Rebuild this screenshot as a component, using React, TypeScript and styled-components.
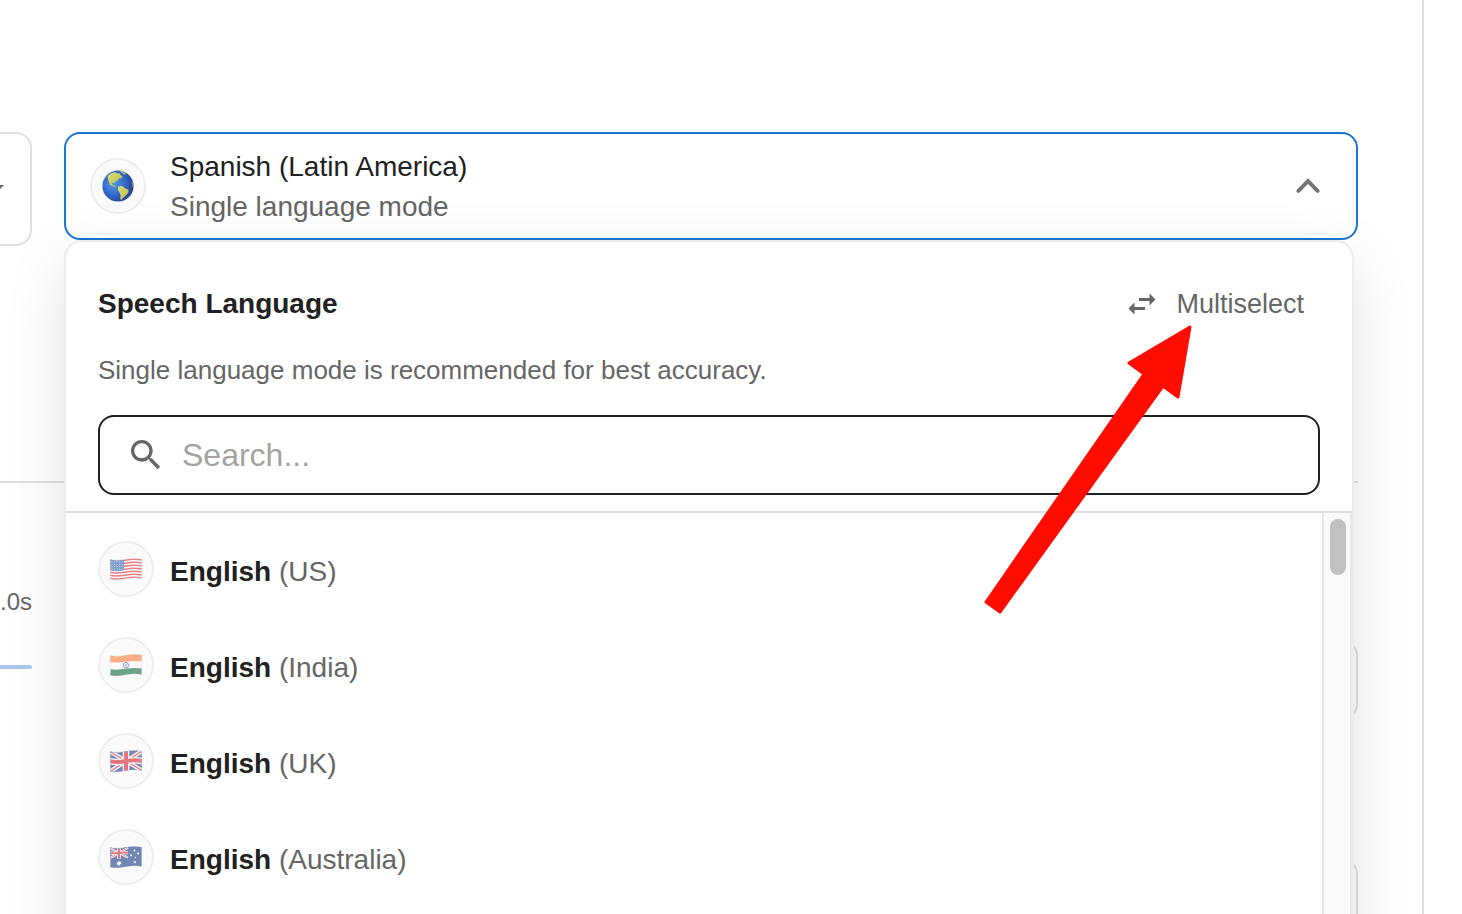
import React, { useId } from 'react';
import styled, { createGlobalStyle } from 'styled-components';

const GlobalStyle = createGlobalStyle`
  *, *::before, *::after { box-sizing: border-box; }
  body {
    margin: 0;
    background: #fff;
    color: #212121;
    font-family: "Liberation Sans", Arial, sans-serif;
  }
  button, input { font: inherit; color: inherit; }
`;

const Page = styled.main`
  display: flex;
  height: 100vh;
  padding-right: 38px;
  overflow: hidden;
`;

const Panel = styled.div`
  flex: 1;
  min-width: 0;
  padding: 132px 64px 0 0;
  border-right: 2px solid #dfdfdf;
`;

const FieldRow = styled.div`
  display: flex;
  align-items: flex-start;
  gap: 32px;
  height: 114px;
`;

const SideSelect = styled.button`
  display: flex;
  flex: none;
  align-items: center;
  justify-content: flex-end;
  width: 32px;
  height: 114px;
  padding: 0 12px 0 0;
  overflow: hidden;
  border: 2px solid #dfdfdf;
  border-left: 0;
  border-radius: 0 16px 16px 0;
  background: #fff;
  color: #666;
`;

const Icon = styled.svg<{ $size: number }>`
  display: block;
  flex: none;
  width: ${(p) => p.$size}px;
  height: ${(p) => p.$size}px;
  fill: currentColor;
`;

const Picker = styled.div`
  position: relative;
  flex: 1;
  min-width: 0;
`;

const Trigger = styled.button`
  display: flex;
  align-items: center;
  gap: 24px;
  width: 100%;
  height: 108px;
  padding: 0 24px;
  border: 2px solid #1976d2;
  border-radius: 16px;
  background: #fff;
  text-align: left;
  font-size: 28px;
  line-height: 40px;
`;

const TriggerText = styled.span`
  display: flex;
  flex: 1;
  flex-direction: column;
  padding-top: 2px;
`;

const Muted = styled.span`
  color: #666;
`;

const Badge = styled.span<{ $dim?: boolean }>`
  display: flex;
  flex: none;
  align-items: center;
  justify-content: center;
  width: 56px;
  height: 56px;
  border: 2px solid #eee;
  border-radius: 50%;
  background: #fafafa;

  svg { opacity: ${(p) => (p.$dim ? 0.6 : 1)}; }
`;

const Chevron = styled(Icon)`
  color: #757575;
`;

const Menu = styled.section`
  position: absolute;
  top: 110px;
  left: 2px;
  right: 6px;
  border-radius: 16px;
  background: #fff;
  box-shadow: 0 0 0 2px #ececec, 0 18px 64px rgba(0, 0, 0, 0.12);
`;

const MenuHeader = styled.header`
  display: flex;
  flex-direction: column;
  padding: 32px 32px 16px;
  border-bottom: 2px solid #dfdfdf;
`;

const TitleRow = styled.div`
  display: flex;
  align-items: center;
  justify-content: space-between;
  height: 60px;
`;

const Title = styled.h2`
  margin: 0;
  font-size: 28px;
  line-height: 40px;
`;

const ModeButton = styled.button`
  display: flex;
  align-items: center;
  gap: 16px;
  padding: 0 16px;
  border: 0;
  background: none;
  color: #666;
  font-size: 27px;
  line-height: 40px;
`;

const Hint = styled.p`
  margin: 16px 0 25px;
  color: #666;
  font-size: 26px;
  line-height: 40px;
`;

const SearchBox = styled.label`
  display: flex;
  align-items: center;
  gap: 16px;
  height: 80px;
  padding: 0 26px;
  border: 2px solid #212121;
  border-radius: 16px;
  color: #666;
`;

const SearchInput = styled.input`
  flex: 1;
  min-width: 0;
  padding: 0;
  border: 0;
  outline: 0;
  background: none;
  color: #212121;
  font-size: 32px;
  line-height: 40px;

  &::placeholder { color: #a3a3a3; opacity: 1; }
`;

const ListArea = styled.div`
  display: flex;
  min-height: 480px;
`;

const Languages = styled.ul`
  flex: 1;
  margin: 0;
  padding: 8px 0;
  list-style: none;
`;

const LanguageButton = styled.button`
  display: flex;
  align-items: center;
  gap: 16px;
  width: 100%;
  height: 96px;
  padding: 0 32px;
  border: 0;
  background: none;
  font-size: 28px;
  line-height: 40px;
  text-align: left;
`;

const LanguageName = styled.span`
  padding-top: 6px;
`;

const ScrollTrack = styled.div`
  width: 30px;
  padding: 6px 4px 0 6px;
  border: solid #e8e8e8;
  border-width: 0 2px;
  background: #fafafa;
`;

const ScrollThumb = styled.div`
  width: 16px;
  height: 56px;
  border-radius: 8px;
  background: #c1c1c1;
`;

const Arrow = styled.svg`
  position: absolute;
  top: 76px;
  right: 156px;
  width: 220px;
  height: 300px;
  pointer-events: none;
`;

const Divider = styled.hr`
  height: 2px;
  margin: 235px 0 0;
  border: 0;
  background: #dfdfdf;
`;

const Details = styled.div`
  display: flex;
  gap: 32px;
`;

const Timing = styled.div`
  display: flex;
  flex: none;
  flex-direction: column;
  width: 32px;
  padding-top: 99px;
  color: #666;
  font-size: 24px;
  line-height: 40px;
  text-align: right;
`;

const TimeBar = styled.div`
  height: 4px;
  margin-top: 43px;
  border-radius: 0 2px 2px 0;
  background: #a9c8ee;
`;

const Fields = styled.div`
  display: flex;
  flex: 1;
  flex-direction: column;
  gap: 138px;
  padding-top: 157px;
`;

const FieldOutline = styled.div`
  height: 80px;
  border: 2px solid #dfdfdf;
  border-radius: 16px;
`;

const WAVE = 'M0.4 2.4C5 4 9 3.4 15 2.4S26 1 31.6 2.2V21.4C26 20.4 21 20.8 15 21.8S5 23.2 0.4 22.2Z';

function Flag({ children }: { children: React.ReactNode }) {
  const id = useId();
  return (
    <svg width="32" height="24" viewBox="0 0 32 24" aria-hidden="true">
      <clipPath id={id}><path d={WAVE} /></clipPath>
      <g clipPath={`url(#${id})`}>{children}</g>
      <path d={WAVE} fill="none" stroke="#555" strokeOpacity="0.25" strokeWidth="0.8" />
    </svg>
  );
}

const band = (y: number) => `M0 ${y}C5 ${y + 1.6} 9 ${y + 1} 15 ${y}S26 ${y - 1.4} 32 ${y - 0.2}`;

function UnionJack() {
  return (
    <g>
      <rect width="32" height="24" fill="#1c3a8c" />
      <path d="M0 2.5L32 21.5M0 22.5L32 2" stroke="#fff" strokeWidth="4" />
      <path d="M0 2.5L32 21.5M0 22.5L32 2" stroke="#d8202f" strokeWidth="1.4" />
      <path d="M16 0V24" stroke="#fff" strokeWidth="6.5" />
      <path d={band(12.2)} stroke="#fff" strokeWidth="6.5" fill="none" />
      <path d="M16 0V24" stroke="#d8202f" strokeWidth="4" />
      <path d={band(12.2)} stroke="#d8202f" strokeWidth="4" fill="none" />
    </g>
  );
}

const flags: Record<string, React.ReactNode> = {
  US: (
    <>
      <rect width="32" height="24" fill="#fff" />
      {[0, 1, 2, 3, 4, 5, 6].map((i) => (
        <path key={i} d={band(3.2 + i * 3)} stroke="#dc2c3a" strokeWidth="1.5" fill="none" />
      ))}
      <path d="M0 0H14V13.2C9 14.2 5 14.8 0 13.2Z" fill="#2c62ad" />
      {[0, 1, 2, 3].map((r) =>
        [0, 1, 2, 3, 4].map((c) => (
          <circle key={`${r}-${c}`} cx={2 + c * 2.5} cy={4.8 + r * 2.4} r="0.5" fill="#dce8f8" />
        )),
      )}
    </>
  ),
  India: (
    <>
      <rect width="32" height="24" fill="#fff" />
      <path d={band(5)} stroke="#ff7a35" strokeWidth="7.6" fill="none" />
      <path d={band(19.4)} stroke="#0b6b3a" strokeWidth="7.2" fill="none" />
      <circle cx="16" cy="12.2" r="2.8" fill="#d9dcf5" stroke="#3a45a8" strokeWidth="0.8" />
      <circle cx="16" cy="12.2" r="0.8" fill="#3a45a8" />
    </>
  ),
  UK: <UnionJack />,
  Australia: (
    <>
      <rect width="32" height="24" fill="#173a86" />
      <g transform="translate(0 1.8) scale(0.56 0.5)"><UnionJack /></g>
      <g fill="#fff">
        <path d="M9 15.4l.7 1.5 1.6-.3-.7 1.4 1.1 1.1-1.6.2-.3 1.6-1.1-1.1-1.5.7.3-1.6-1.3-1 1.6-.4z" />
        <circle cx="24.5" cy="5.4" r="1" />
        <circle cx="21" cy="10.2" r="1" />
        <circle cx="28" cy="8.4" r="1" />
        <circle cx="25.6" cy="12.4" r="0.6" />
        <circle cx="24.8" cy="17.2" r="1.1" />
      </g>
    </>
  ),
};

function Globe() {
  const id = useId();
  return (
    <svg width="32" height="32" viewBox="0 0 32 32" aria-hidden="true">
      <defs>
        <radialGradient id={`${id}s`} cx="0.36" cy="0.42" r="0.66">
          <stop offset="0" stopColor="#4f9be0" />
          <stop offset="0.55" stopColor="#3568cc" />
          <stop offset="1" stopColor="#25408f" />
        </radialGradient>
        <linearGradient id={`${id}l`} x1="0" y1="0" x2="1" y2="1">
          <stop offset="0" stopColor="#d3e27a" />
          <stop offset="0.6" stopColor="#c9c95a" />
          <stop offset="1" stopColor="#a39f48" />
        </linearGradient>
        <clipPath id={`${id}c`}><circle cx="16" cy="16" r="15.6" /></clipPath>
      </defs>
      <circle cx="16" cy="16" r="15.6" fill={`url(#${id}s)`} />
      <g clipPath={`url(#${id}c)`} fill={`url(#${id}l)`}>
        <path d="M5.5 6.5C7.5 3.8 10 2.4 13 2.2L15.6 3.4 17.4 3 18.6 5.2 20.8 6.6 19 8.4 16.8 8.2 16.2 10 13.6 11.2 12.6 13 11.2 12.6 9.8 13 10.6 15 12.6 15.4 14.2 17.2 13 17.2 10.4 16 7.8 14.4 6.4 10.6Z" />
        <path d="M17 0.8L21 1.2 24.6 3 23.4 5 21.4 4.6 19.6 2.8Z" opacity="0.75" />
        <path d="M16.4 16.6L19 15.8 21.6 17 23.4 18.6 26.6 19.8 26.4 22.4 24 25.2 21.4 27.8 19 30 18.2 28.6 18.6 25.4 17.6 22.4 15.8 20Z" />
        <path d="M30 11L32 12V18L30.4 17Z" opacity="0.6" />
      </g>
    </svg>
  );
}

export default function App() {
  return (
    <>
      <GlobalStyle />
      <Page>
        <Panel>
          <FieldRow>
            <SideSelect type="button" aria-label="Open options">
              <Icon $size={48} viewBox="0 0 24 24"><path d="M7 10l5 5 5-5z" /></Icon>
            </SideSelect>
            <Picker>
              <Trigger type="button" aria-expanded="true" aria-controls="language-menu">
                <Badge><Globe /></Badge>
                <TriggerText>
                  <span>Spanish (Latin America)</span>
                  <Muted>Single language mode</Muted>
                </TriggerText>
                <Chevron $size={48} viewBox="0 0 24 24">
                  <path d="M7.2 14.4L12 9.6l4.8 4.8" fill="none" stroke="currentColor" strokeWidth="2" strokeLinecap="round" />
                </Chevron>
              </Trigger>
              <Menu id="language-menu">
                <MenuHeader>
                  <TitleRow>
                    <Title>Speech Language</Title>
                    <ModeButton type="button">
                      <Icon $size={36} viewBox="0 0 24 24">
                        <path d="M6.99 11L3 15l3.99 4v-3H14v-2H6.99v-3zM21 9l-3.99-4v3H10v2h7.01v3L21 9z" />
                      </Icon>
                      Multiselect
                    </ModeButton>
                  </TitleRow>
                  <Hint>Single language mode is recommended for best accuracy.</Hint>
                  <SearchBox>
                    <Icon $size={40} viewBox="0 0 24 24">
                      <path d="M15.5 14h-.79l-.28-.27C15.41 12.59 16 11.11 16 9.5 16 5.91 13.09 3 9.5 3S3 5.91 3 9.5 5.91 16 9.5 16c1.61 0 3.09-.59 4.23-1.57l.27.28v.79l5 4.99L20.49 19l-4.99-5zm-6 0C7.01 14 5 11.99 5 9.5S7.01 5 9.5 5 14 7.01 14 9.5 11.99 14 9.5 14z" />
                    </Icon>
                    <SearchInput type="text" placeholder="Search..." aria-label="Search languages" />
                  </SearchBox>
                </MenuHeader>
                <ListArea>
                  <Languages>
                    {Object.keys(flags).map((region) => (
                      <li key={region}>
                        <LanguageButton type="button">
                          <Badge $dim><Flag>{flags[region]}</Flag></Badge>
                          <LanguageName><strong>English</strong> <Muted>({region})</Muted></LanguageName>
                        </LanguageButton>
                      </li>
                    ))}
                  </Languages>
                  <ScrollTrack><ScrollThumb /></ScrollTrack>
                </ListArea>
                <Arrow viewBox="976 318 220 300" aria-hidden="true">
                  <path
                    d="M1190 327L1178 397 1163 386 1000 612 986 602 1144 374 1129 363Z"
                    fill="#ff0d00"
                    stroke="#ff0d00"
                    strokeWidth="3"
                    strokeLinejoin="round"
                  />
                </Arrow>
              </Menu>
            </Picker>
          </FieldRow>
          <Divider />
          <Details>
            <Timing>
              <span>.0s</span>
              <TimeBar />
            </Timing>
            <Fields>
              <FieldOutline />
              <FieldOutline />
            </Fields>
          </Details>
        </Panel>
      </Page>
    </>
  );
}
